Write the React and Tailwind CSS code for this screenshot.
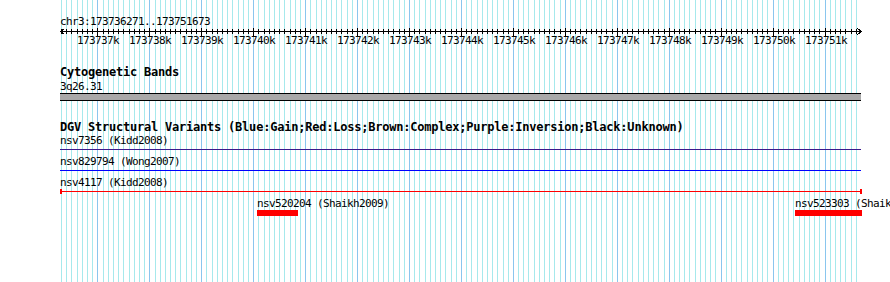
import React from "react";

const START = 173736271;
const END = 173751673;
const LEFT = 60;
const WIDTH = 800;

// genome position -> pixel column on the canvas
const toX = (pos) => LEFT + ((pos - START) * WIDTH) / (END - START);

const ticks = [];
for (let p = Math.ceil(START / 100) * 100; p <= END; p += 100) ticks.push(p);
const majors = ticks.filter((p) => p % 1000 === 0);

const Grid = () => (
  <svg className="absolute inset-0" width="890" height="282" shapeRendering="crispEdges">
    {ticks.map((p) => {
      const x = Math.floor(toX(p)) + 0.5;
      return (
        <line
          key={p}
          x1={x}
          x2={x}
          y1="0"
          y2="282"
          stroke={p % 1000 === 0 ? "#8ac6ee" : "#a6e9ec"}
          strokeWidth="1"
        />
      );
    })}
  </svg>
);

const Ruler = () => (
  <svg width="803" height="8" className="block mt-px" shapeRendering="crispEdges">
    <line x1="0" x2="802" y1="3.5" y2="3.5" stroke="#000" />
    <path d="M4.5 0.5 L0.5 3.5 L4.5 6.5" fill="none" stroke="#000" />
    <path d="M797.5 0.5 L801.5 3.5 L797.5 6.5" fill="none" stroke="#000" />
    {ticks.map((p) => {
      const x = Math.floor(toX(p)) - LEFT + 0.5;
      const big = p % 1000 === 0;
      return <line key={p} x1={x} x2={x} y1={big ? 0 : 1} y2={big ? 8 : 6} stroke="#000" />;
    })}
  </svg>
);

const Title = ({ children, className = "" }) => (
  <div className={`h-[13px] whitespace-nowrap text-[12px] leading-[13px] font-bold tracking-[-0.22px] ${className}`}>
    {children}
  </div>
);

const Label = ({ children, className = "" }) => (
  <div className={`h-[11px] whitespace-nowrap ${className}`}>{children}</div>
);

const App = () => {
  return (
    <div className="relative w-[890px] h-[282px] overflow-hidden bg-white text-black font-['DejaVu_Sans_Mono',monospace]">
      <Grid />
      <div className="relative flex flex-col pl-[60px] text-[11px] leading-[11px] tracking-[-0.62px]">
        <Label className="mt-[16px]">chr3:173736271..173751673</Label>
        <Ruler />
        <div className="relative h-[11px] -mt-px">
          {majors.map((p) => (
            <span
              key={p}
              className="absolute top-0 whitespace-nowrap"
              style={{ left: Math.floor(toX(p)) - LEFT - 20 }}
            >
              {Math.round(p / 1000)}k
            </span>
          ))}
        </div>

        <Title className="mt-[20px]">Cytogenetic Bands</Title>
        <Label className="mt-[2px]">3q26.31</Label>
        <div className="mt-px w-[801px] h-[8px] border-y border-black bg-[#a9a9a9]" />

        <Title className="mt-[20px]">
          DGV Structural Variants (Blue:Gain;Red:Loss;Brown:Complex;Purple:Inversion;Black:Unknown)
        </Title>
        <Label className="mt-[1px]">nsv7356 (Kidd2008)</Label>
        <div className="mt-[3px] w-[801px] h-px bg-[#3c1a8c]" />
        <Label className="mt-[6px]">nsv829794 (Wong2007)</Label>
        <div className="mt-[3px] w-[801px] h-px bg-[#0000ff]" />
        <Label className="mt-[6px]">nsv4117 (Kidd2008)</Label>
        <div className="mt-px flex items-center w-[802px] h-[5px]">
          <div className="w-[2px] h-[5px] bg-[#ff0000]" />
          <div className="flex-1 h-px bg-[#ff0000]" />
          <div className="w-[2px] h-[5px] bg-[#ff0000]" />
        </div>

        <div className="flex items-start">
          <div className="ml-[197px] flex flex-col">
            <Label className="mt-[4px]">nsv520204 (Shaikh2009)</Label>
            <div className="mt-px w-[41px] h-[6px] bg-[#ff0000]" />
          </div>
          <div className="ml-[406px] flex flex-col">
            <Label className="mt-[4px]">nsv523303 (Shaikh2009)</Label>
            <div className="mt-px w-[67px] h-[6px] bg-[#ff0000]" />
          </div>
        </div>
      </div>
    </div>
  );
};

export default App;
